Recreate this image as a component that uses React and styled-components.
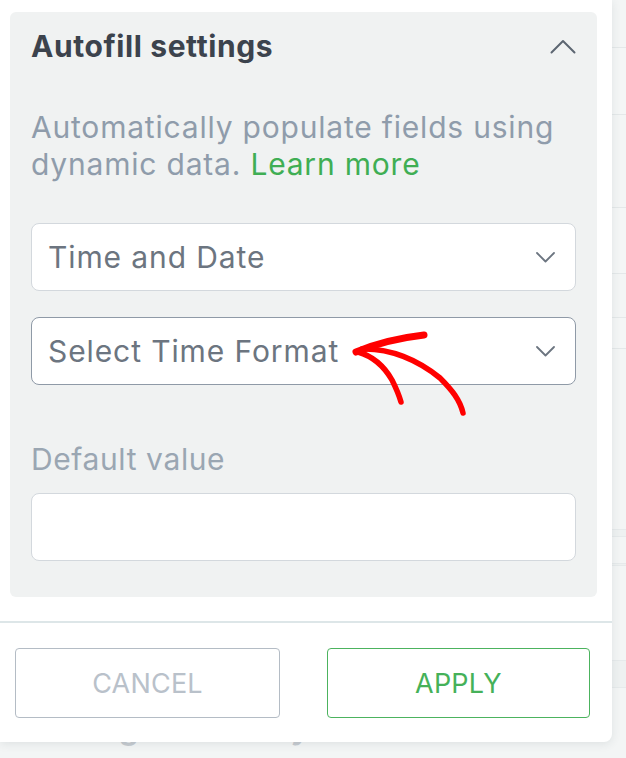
import React from "react";
import styled, { createGlobalStyle } from "styled-components";

const Global = createGlobalStyle`
  html, body { margin: 0; padding: 0; }
  body {
    background: #f3f5f5;
    font-family: Inter, "Noto Sans", sans-serif;
    overflow: hidden;
  }
  #root { width: 626px; height: 758px; }
`;

const Page = styled.div`
  position: relative;
  width: 626px;
  height: 758px;
  overflow: hidden;
  background: #f3f5f5;
`;

const Backdrop = styled.div`
  display: flex;
  flex-direction: column;
  padding-top: 47px;
`;

const GhostCard = styled.div`
  margin-left: 540px;
  margin-top: ${(p) => p.$gap}px;
  width: 240px;
  height: ${(p) => p.$h}px;
  border: 1.5px solid #e4e8e9;
  border-radius: ${(p) => (p.$round ? 20 : 8)}px;
  background: #f4f6f6;
`;

const GhostBand = styled.div`
  margin-top: ${(p) => p.$gap}px;
  height: ${(p) => p.$h}px;
  background: #eef1f1;
  border-top: 1px solid #e6eaeb;
  border-bottom: 1px solid #e6eaeb;
`;

const GhostHeading = styled.div`
  margin-top: ${(p) => p.$gap}px;
  padding-left: 31px;
  font-size: 31px;
  font-weight: 700;
  line-height: 36px;
  color: #c6cbd0;
`;

const Popup = styled.div`
  position: absolute;
  left: 0;
  top: 0;
  width: 612px;
  height: 742px;
  background: #ffffff;
  border-bottom-right-radius: 8px;
  box-shadow: 0 2px 10px rgba(40, 60, 70, 0.1);
  display: flex;
  flex-direction: column;
`;

const Card = styled.section`
  margin: 12px 15px 0 10px;
  padding: 21px 21px 36px;
  background: #f0f2f2;
  border-radius: 6px;
  display: flex;
  flex-direction: column;
`;

const TitleRow = styled.div`
  display: flex;
  align-items: center;
  justify-content: space-between;
  height: 26px;
`;

const Title = styled.h2`
  margin: 0;
  font-size: 30px;
  font-weight: 700;
  line-height: 26px;
  color: #3c434d;
  letter-spacing: 0.6px;
`;

const Description = styled.p`
  margin: 50px 0 0;
  font-size: 30px;
  line-height: 37px;
  letter-spacing: 0.8px;
  color: #8f9cab;
`;

const Link = styled.a`
  color: #3fae54;
  text-decoration: none;
`;

const Select = styled.div`
  margin-top: ${(p) => p.$gap}px;
  height: 68px;
  box-sizing: border-box;
  background: #ffffff;
  border: 1.5px solid ${(p) => (p.$focused ? "#8f9aa7" : "#d3d8dd")};
  border-radius: 8px;
  display: flex;
  align-items: center;
  justify-content: space-between;
  padding: 0 20px 0 16px;
  font-size: 30px;
  letter-spacing: 0.9px;
  color: #6c7580;
`;

const Label = styled.div`
  margin-top: 59px;
  font-size: 30px;
  line-height: 30px;
  letter-spacing: 0.6px;
  color: #9aa6b2;
`;

const Input = styled.div`
  margin-top: 19px;
  height: 68px;
  box-sizing: border-box;
  background: #ffffff;
  border: 1.5px solid #d3d8dd;
  border-radius: 8px;
`;

const Divider = styled.div`
  margin-top: 24px;
  height: 1.5px;
  background: #dde6e8;
`;

const Footer = styled.div`
  display: grid;
  grid-template-columns: 265px 263px;
  column-gap: 47px;
  padding: 25px 0 0 15px;
`;

const Button = styled.button`
  height: 70px;
  box-sizing: border-box;
  background: #ffffff;
  border: 1.5px solid ${(p) => (p.$primary ? "#4cb35e" : "#b4bcc5")};
  border-radius: 4px;
  font-family: Inter, sans-serif;
  font-size: 27px;
  font-weight: 400;
  padding-top: 3px;
  color: ${(p) => (p.$primary ? "#45b159" : "#b9c1ca")};
  letter-spacing: 0.2px;
`;

const Annotation = styled.svg`
  position: absolute;
  left: 0;
  top: 0;
  pointer-events: none;
`;

const Chevron = ({ up }) => (
  <svg width="26" height="15" viewBox="0 0 26 15" fill="none">
    <path
      d={up ? "M1.5 13.5 L13 2 L24.5 13.5" : "M1.5 1.5 L13 13 L24.5 1.5"}
      stroke={up ? "#5d6672" : "#6c7580"}
      strokeWidth="2"
      strokeLinecap="round"
      strokeLinejoin="round"
    />
  </svg>
);

const SmallChevron = () => (
  <svg width="19" height="11" viewBox="0 0 19 11" fill="none">
    <path d="M1 1 L9.5 9.5 L18 1" stroke="#6c7580" strokeWidth="1.8" strokeLinecap="round" strokeLinejoin="round" />
  </svg>
);

export default function App() {
  return (
    <>
      <Global />
      <Page>
        <Backdrop>
          <GhostCard $gap={0} $h={66} />
          <GhostCard $gap={92} $h={65} />
          <GhostCard $gap={43} $h={30} $round />
          <GhostBand $gap={180} $h={6} />
          <GhostBand $gap={26} $h={1} />
          <GhostBand $gap={94} $h={26} />
          <GhostHeading $gap={22}>Settings Summary</GhostHeading>
        </Backdrop>
        <Popup>
          <Card>
            <TitleRow>
              <Title>Autofill settings</Title>
              <Chevron up />
            </TitleRow>
            <Description>
              Automatically populate fields using dynamic data. <Link href="#">Learn more</Link>
            </Description>
            <Select $gap={40}>
              <span>Time and Date</span>
              <SmallChevron />
            </Select>
            <Select $gap={26} $focused>
              <span>Select Time Format</span>
              <SmallChevron />
            </Select>
            <Label>Default value</Label>
            <Input />
          </Card>
          <Divider />
          <Footer>
            <Button>CANCEL</Button>
            <Button $primary>APPLY</Button>
          </Footer>
        </Popup>
        <Annotation width="626" height="758" viewBox="0 0 626 758">
          <g fill="none" stroke="#ff0000" strokeLinecap="round" strokeLinejoin="round">
            <path d="M356 352 C 375 344, 398 338, 424 335" strokeWidth="7" />
            <path d="M358 352 C 372 356, 384 366, 392 380 C 396 388, 399 395, 401 402" strokeWidth="5.5" />
            <path d="M362 349 C 390 348, 418 360, 440 378 C 452 390, 460 400, 463 413" strokeWidth="5.5" />
          </g>
        </Annotation>
      </Page>
    </>
  );
}
